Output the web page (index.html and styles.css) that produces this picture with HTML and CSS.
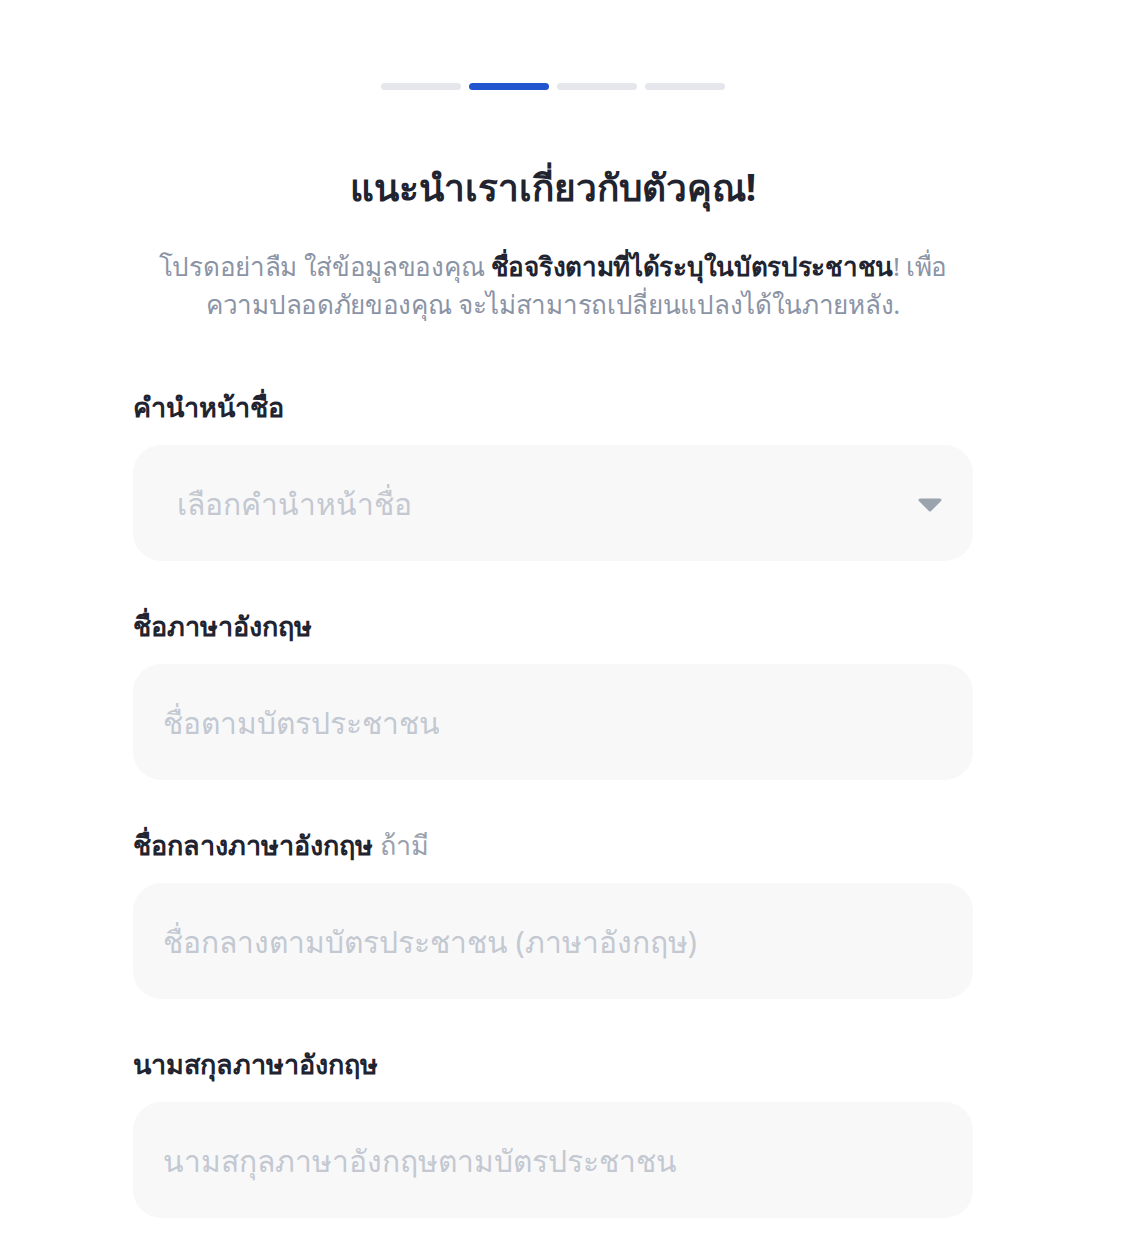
FILE: index.html
```html
<!DOCTYPE html>
<html lang="th">

<head>
    <meta charset="UTF-8">
    <meta name="viewport" content="width=device-width, initial-scale=1.0">
    <title>แนะนำเราเกี่ยวกับตัวคุณ</title>
    <link rel="stylesheet" href="styles.css">
</head>

<body>
    <div class="page">
        <div class="steps">
            <span class="step"></span>
            <span class="step active"></span>
            <span class="step"></span>
            <span class="step"></span>
        </div>

        <h1 class="title">แนะนำเราเกี่ยวกับตัวคุณ!</h1>
        <p class="intro">โปรดอย่าลืม ใส่ข้อมูลของคุณ <b>ชื่อจริงตามที่ได้ระบุในบัตรประชาชน</b>! เพื่อความปลอดภัยของคุณ จะไม่สามารถเปลี่ยนแปลงได้ในภายหลัง.</p>

        <form class="form">
            <div class="field">
                <label for="prefix">คำนำหน้าชื่อ</label>
                <div class="select-box">
                    <select id="prefix" name="prefix">
                        <option value="">เลือกคำนำหน้าชื่อ</option>
                        <option value="mr">นาย</option>
                        <option value="mrs">นาง</option>
                        <option value="ms">นางสาว</option>
                    </select>
                    <svg class="caret" width="24" height="14" viewBox="0 0 24 14">
                        <path d="M2 2 H22 L12 12 Z" fill="#9aa3ae" stroke="#9aa3ae" stroke-width="3" stroke-linejoin="round"/>
                    </svg>
                </div>
            </div>
            <div class="field">
                <label for="first">ชื่อภาษาอังกฤษ</label>
                <input id="first" type="text" placeholder="ชื่อตามบัตรประชาชน">
            </div>
            <div class="field">
                <label for="middle">ชื่อกลางภาษาอังกฤษ <span class="optional">ถ้ามี</span></label>
                <input id="middle" type="text" placeholder="ชื่อกลางตามบัตรประชาชน (ภาษาอังกฤษ)">
            </div>
            <div class="field">
                <label for="last">นามสกุลภาษาอังกฤษ</label>
                <input id="last" type="text" placeholder="นามสกุลภาษาอังกฤษตามบัตรประชาชน">
            </div>
        </form>
    </div>
</body>

</html>
```

FILE: styles.css
```css
body {
    margin: 0;
    background-color: #fff;
    font-family: "Noto Sans", "Liberation Sans", sans-serif;
    color: #1f2430;
}

.page {
    width: 840px;
    margin: 0 auto;
    padding: 83px 18px 0 0;
}

.steps {
    display: flex;
    justify-content: center;
    gap: 8px;
}

.step {
    width: 80px;
    height: 7px;
    border-radius: 4px;
    background-color: #e6e7ec;
}

.step.active {
    background-color: #2155cf;
}

.title {
    margin: 72px 0 0;
    font-size: 37px;
    font-weight: bold;
    text-align: center;
    line-height: 50px;
}

.intro {
    margin: 35px auto 0;
    width: 820px;
    font-size: 26px;
    line-height: 38px;
    letter-spacing: -0.3px;
    color: #8b94a5;
    text-align: center;
}

.intro b {
    color: #1f2430;
}

.form {
    margin-top: 66px;
}

.field {
    margin-bottom: 47px;
}

label {
    display: block;
    margin-bottom: 20px;
    font-size: 27px;
    line-height: 36px;
    font-weight: bold;
}

.optional {
    font-weight: normal;
    color: #9aa1ad;
}

input,
select {
    display: block;
    box-sizing: border-box;
    width: 100%;
    height: 116px;
    padding: 0 30px;
    border: none;
    border-radius: 28px;
    background-color: #f8f8f9;
    font-family: inherit;
    font-size: 30px;
    color: #1f2430;
    outline: none;
}

input::placeholder {
    color: #c3c8d1;
}

.select-box {
    position: relative;
}

select {
    appearance: none;
    padding-left: 44px;
    color: #c3c8d1;
}

.caret {
    position: absolute;
    right: 31px;
    top: 53px;
    pointer-events: none;
}
```
